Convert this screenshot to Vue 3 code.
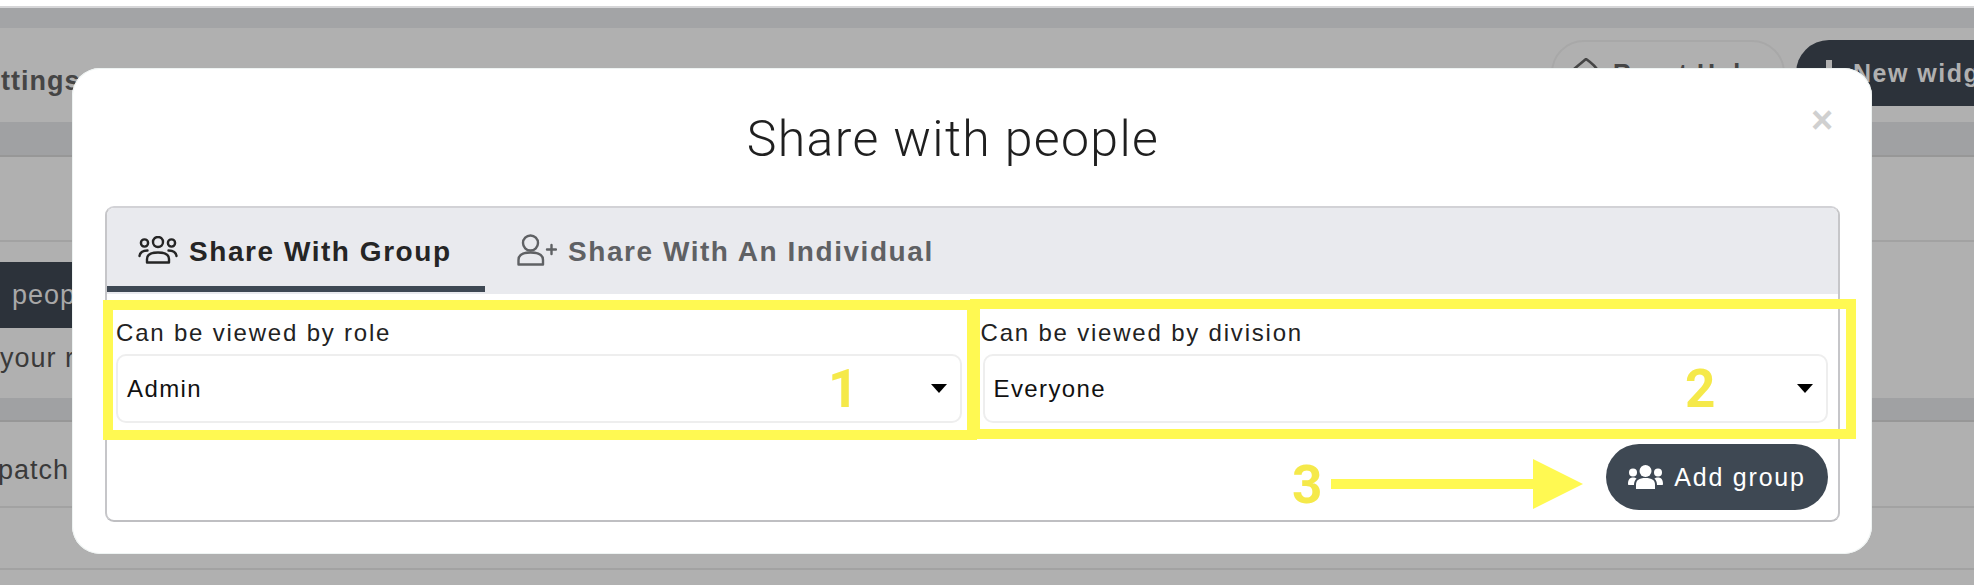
<template>
  <div class="page">
    <div class="top-gap"></div>
    <div class="header-bar"></div>
    <div class="toolbar">
      <div class="settings-label">Settings</div>
      <div class="reset-btn">
        <svg class="reset-icon" viewBox="0 0 30 30" width="30" height="30">
          <path d="M13 1 L1 11 L13 24 V18 C20 18 25 21 29 27 C29 18 26 10 13 1 Z" fill="none" stroke="#454545" stroke-width="2.6" stroke-linejoin="round" />
        </svg>
        <span>Reset Hub</span>
      </div>
      <div class="new-btn">
        <span class="plus"></span>
        <span>New widget</span>
      </div>
    </div>
    <div class="strip"></div>
    <div class="row row-a"></div>
    <div class="row row-b">
      <div class="share-btn"><span>Share with people</span></div>
      <div class="row-b-text">Share with your role</div>
    </div>
    <div class="strip strip-thin"></div>
    <div class="row row-c">Dispatch</div>
    <div class="row row-d"></div>
    <div class="row row-e"></div>

    <div class="modal">
      <button class="close" aria-label="Close">×</button>
      <h2 class="modal-title">Share with people</h2>
      <div class="card">
        <div class="tabs">
          <div class="tab active">
            <svg class="tab-icon" viewBox="0 0 40 28" width="40" height="28" fill="none" stroke="#252525" stroke-width="2.4" stroke-linecap="round">
              <circle cx="20" cy="6" r="5" />
              <circle cx="6.5" cy="7" r="3.6" />
              <circle cx="33.5" cy="7" r="3.6" />
              <path d="M9 26.5 V23 C9 19 13 16.5 20 16.5 C27 16.5 31 19 31 23 V26.5 Z" stroke-linejoin="round" />
              <path d="M1.5 20 C2 16.5 5 14.5 9.5 14.5" />
              <path d="M38.5 20 C38 16.5 35 14.5 30.5 14.5" />
            </svg>
            <span>Share With Group</span>
          </div>
          <div class="tab">
            <svg class="tab-icon" viewBox="0 0 40 32" width="40" height="32" fill="none" stroke="#5f6164" stroke-width="2.4" stroke-linecap="round" stroke-linejoin="round">
              <circle cx="13.5" cy="9" r="7.5" />
              <path d="M1.5 30.5 V26 C1.5 21 6 18.5 13.5 18.5 C21 18.5 26 21 26 26 V30.5 Z" />
              <path d="M30 15.5 H39 M34.5 11 V20" />
            </svg>
            <span>Share With An Individual</span>
          </div>
        </div>
        <div class="fields">
          <div class="field" v-for="field in fields" :key="field.label">
            <label>{{ field.label }}</label>
            <div class="select">
              <span>{{ field.value }}</span>
              <i class="caret"></i>
            </div>
          </div>
        </div>
        <div class="actions">
          <button class="add-btn">
            <svg viewBox="0 0 35 24" width="35" height="24" fill="#fff">
              <circle cx="17.5" cy="6" r="6" />
              <circle cx="5" cy="7.5" r="4" />
              <circle cx="30" cy="7.5" r="4" />
              <path d="M8 24 V20 C8 15 11 13 17.5 13 C24 13 27 15 27 20 V24 Z" />
              <path d="M0 19 C0 14.5 2 12.5 5 12.5 C6.5 12.5 7.8 13 8.6 13.6 C7 15 6 17.5 6 20 H1 C0.4 20 0 19.6 0 19 Z" />
              <path d="M35 19 C35 14.5 33 12.5 30 12.5 C28.5 12.5 27.2 13 26.4 13.6 C28 15 29 17.5 29 20 H34 C34.6 20 35 19.6 35 19 Z" />
            </svg>
            <span>Add group</span>
          </button>
        </div>
      </div>
    </div>

    <div class="mark mark-1"></div>
    <div class="mark mark-2"></div>
    <span class="num num-1">1</span>
    <span class="num num-2">2</span>
    <span class="num num-3">3</span>
    <svg class="arrow" viewBox="0 0 252 50" width="252" height="50">
      <path d="M0 20 H202 V0 L252 25 L202 50 V30 H0 Z" fill="#fff952" />
    </svg>
  </div>
</template>

<script setup>
const fields = [
  { label: 'Can be viewed by role', value: 'Admin' },
  { label: 'Can be viewed by division', value: 'Everyone' }
]
</script>

<style scoped>
.page {
  position: relative;
  width: 1974px;
  height: 586px;
  overflow: hidden;
  background: #fff;
  font-family: "Liberation Sans", Arial, sans-serif;
  color: #222;
}

.top-gap {
  height: 6px;
}

.header-bar {
  height: 20px;
  background: #a3a4a6;
  border-top: 2px solid #d6d6d8;
}

.toolbar {
  height: 94px;
  background: #b0b0b0;
  display: flex;
  align-items: flex-start;
  gap: 11px;
  padding-top: 12px;
  box-sizing: border-box;
}

.settings-label {
  margin: 26px auto 0 -34px;
  font-size: 27px;
  font-weight: 700;
  letter-spacing: 1px;
  line-height: 30px;
  color: #454545;
  white-space: nowrap;
}

.reset-btn {
  width: 234px;
  height: 66px;
  box-sizing: border-box;
  border: 2px solid #a8a8a8;
  border-radius: 33px;
  display: flex;
  align-items: center;
  gap: 10px;
  padding-left: 20px;
  font-size: 25px;
  font-weight: 700;
  letter-spacing: 1.5px;
  color: #454545;
  white-space: nowrap;
}

.reset-icon {
  flex: none;
}

.new-btn {
  width: 178px;
  height: 66px;
  background: #2c323a;
  border-radius: 33px 0 0 33px;
  color: #b0b0b0;
  display: flex;
  align-items: center;
  gap: 21px;
  padding-left: 30px;
  box-sizing: border-box;
  font-size: 25px;
  font-weight: 700;
  letter-spacing: 1.5px;
  white-space: nowrap;
  overflow: hidden;
}

.plus {
  flex: none;
  width: 6px;
  height: 26px;
  background: #b0b0b0;
}

.strip {
  height: 33px;
  background: #a0a1a3;
}

.strip-thin {
  height: 22px;
}

.row {
  background: #b0b0b0;
  border-top: 2px solid #979797;
  box-sizing: border-box;
}

.row-a {
  height: 85px;
}

.row-b {
  height: 158px;
  border-top-color: #a2a2a2;
  padding-top: 20px;
  font-size: 27px;
  letter-spacing: 1px;
  line-height: 30px;
  color: #3a3a3a;
  white-space: nowrap;
}

.share-btn {
  width: 200px;
  height: 66px;
  background: #2c323a;
  color: #a8a8a8;
  display: flex;
  align-items: center;
  word-spacing: 3px;
}

.share-btn span {
  margin-left: -140px;
}

.row-b-text {
  margin: 15px 0 0 -146px;
}

.row-c {
  height: 86px;
  border-top-color: #979797;
  padding: 33px 0 0;
  font-size: 27px;
  letter-spacing: 1px;
  line-height: 30px;
  text-indent: -44px;
  color: #3a3a3a;
  white-space: nowrap;
}

.row-d {
  height: 62px;
  border-top-color: #a2a2a2;
}

.row-e {
  height: 17px;
  border-top-color: #a2a2a2;
}

.modal {
  position: absolute;
  left: 72px;
  top: 68px;
  width: 1800px;
  height: 486px;
  box-sizing: border-box;
  padding: 0 32px 0 33px;
  background: #fff;
  border-radius: 28px;
  box-shadow: inset 0 0 0 1px #eef3f2;
}

.modal-title {
  margin: 0;
  height: 138px;
  padding-right: 39px;
  line-height: 142px;
  text-align: center;
  font-family: Roboto, sans-serif;
  font-size: 50px;
  font-weight: 300;
  letter-spacing: 1.35px;
  color: #1f1f1f;
}

.close {
  position: absolute;
  right: 38px;
  top: 42px;
  width: 24px;
  height: 20px;
  padding: 0;
  border: 0;
  background: none;
  color: #d0d0d0;
  font-family: "Liberation Sans", Arial, sans-serif;
  font-size: 38px;
  font-weight: 700;
  line-height: 20px;
}

.card {
  height: 316px;
  box-sizing: border-box;
  border: 2px solid #c6c6c9;
  border-top-color: #d2d2d6;
  border-bottom-color: #bfbfc2;
  border-radius: 9px;
  overflow: hidden;
}

.tabs {
  height: 86px;
  background: #e9eaee;
  display: flex;
  align-items: flex-start;
}

.tab {
  display: flex;
  align-items: center;
  gap: 11px;
  box-sizing: border-box;
  height: 84px;
  padding: 0 0 0 32px;
  font-size: 28px;
  font-weight: 700;
  letter-spacing: 1.55px;
  white-space: nowrap;
  color: #5f6164;
}

.tab span {
  margin-top: 3px;
}

.tab.active {
  width: 378px;
  padding-left: 31px;
  box-shadow: inset 0 -6px 0 #3e4853;
  color: #252525;
}

.fields {
  display: grid;
  grid-template-columns: 1fr 1fr;
  gap: 0 21px;
  padding: 22px 10px 0 9px;
}

.field {
  min-width: 0;
}

.field label {
  display: block;
  font-size: 24px;
  letter-spacing: 1.8px;
  line-height: 26px;
  margin: 4px 0 8px;
  color: #222;
}

.field + .field label {
  margin-left: -2px;
}

.select {
  height: 69px;
  box-sizing: border-box;
  border: 2px solid #eee;
  border-radius: 10px;
  display: flex;
  align-items: center;
  justify-content: space-between;
  padding: 0 13px 0 9px;
  font-size: 24px;
  letter-spacing: 1.4px;
  color: #111;
}

.caret {
  width: 0;
  height: 0;
  border-left: 8px solid transparent;
  border-right: 8px solid transparent;
  border-top: 9px solid #000;
}

.actions {
  display: flex;
  justify-content: flex-end;
  padding: 21px 10px 0 0;
}

.add-btn {
  width: 222px;
  height: 66px;
  border: 0;
  border-radius: 33px;
  background: #3e4853;
  color: #fff;
  display: flex;
  align-items: center;
  justify-content: center;
  gap: 11px;
  font-family: "Liberation Sans", Arial, sans-serif;
  font-size: 25px;
  letter-spacing: 1.8px;
}

.mark {
  position: absolute;
  box-sizing: border-box;
  border: 10px solid #fff952;
}

.mark-1 {
  left: 103px;
  top: 300px;
  width: 874px;
  height: 140px;
}

.mark-2 {
  left: 970px;
  top: 299px;
  width: 886px;
  height: 140px;
}

.num {
  position: absolute;
  font-family: Roboto, sans-serif;
  font-size: 53px;
  font-weight: 700;
  line-height: 54px;
  color: #f5e94a;
}

.num-1 {
  left: 828px;
  top: 362px;
}

.num-2 {
  left: 1685px;
  top: 362px;
}

.num-3 {
  left: 1292px;
  top: 458px;
}

.arrow {
  position: absolute;
  left: 1331px;
  top: 459px;
}
</style>

<style>
html, body {
  margin: 0;
  overflow: hidden;
}
</style>
